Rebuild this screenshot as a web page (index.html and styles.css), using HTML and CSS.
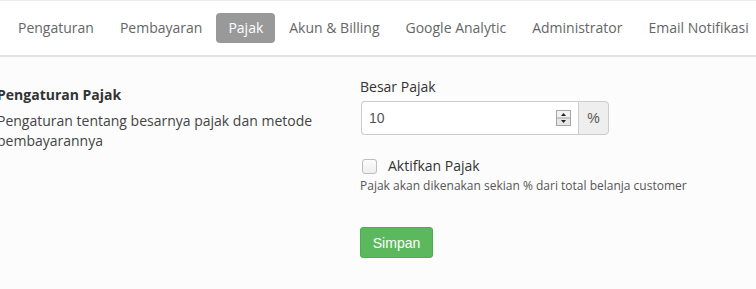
FILE: index.html
```html
<!DOCTYPE html>
<html>
<head>
<meta charset="utf-8">
<link rel="stylesheet" href="styles.css">
</head>
<body>
<div class="page">
  <nav class="tabs">
    <a class="tab">Pengaturan</a>
    <a class="tab">Pembayaran</a>
    <a class="tab active">Pajak</a>
    <a class="tab">Akun &amp; Billing</a>
    <a class="tab">Google Analytic</a>
    <a class="tab">Administrator</a>
    <a class="tab">Email Notifikasi</a>
  </nav>
  <div class="content">
    <div class="info">
      <h4 class="title">Pengaturan Pajak</h4>
      <p class="desc">Pengaturan tentang besarnya pajak dan metode pembayarannya</p>
    </div>
    <div class="form">
      <label class="label">Besar Pajak</label>
      <div class="input-group">
        <div class="input">
          <span class="value">10</span>
          <svg class="spin" width="15" height="16" viewBox="0 0 15 16">
            <rect x="0.5" y="0.5" width="14" height="15" fill="#e6e6e6" stroke="#a6a6a6"/>
            <rect x="1" y="1" width="13" height="6.5" fill="#f2f2f2"/>
            <line x1="1" y1="8" x2="14" y2="8" stroke="#a6a6a6"/>
            <polygon points="5,6 10,6 7.5,3" fill="#222"/>
            <polygon points="5,10 10,10 7.5,13" fill="#222"/>
          </svg>
        </div>
        <span class="addon">%</span>
      </div>
      <div class="check">
        <span class="box"></span>
        <span class="check-label">Aktifkan Pajak</span>
      </div>
      <p class="help">Pajak akan dikenakan sekian % dari total belanja customer</p>
      <button class="btn">Simpan</button>
    </div>
  </div>
</div>
</body>
</html>
```
FILE: styles.css
```css
html, body {
  margin: 0;
  padding: 0;
  background: #fcfcfc;
}
.page {
  font-family: "Open Sans", "Liberation Sans", sans-serif;
  font-size: 14px;
  color: #333;
  width: 756px;
  height: 289px;
  overflow: hidden;
}
.tabs {
  display: flex;
  gap: 2px;
  background: #fff;
  border-top: 1px solid #ececec;
  border-bottom: 2px solid #e3e3e3;
  padding: 12px 0 12px 6px;
  white-space: nowrap;
}
.tab {
  display: block;
  padding: 5px 12px;
  line-height: 20px;
  color: #666;
  border-radius: 4px;
  flex: none;
}
.tab.active {
  background: #999;
  color: #fff;
}
.content {
  display: flex;
  padding-top: 20px;
}
.info {
  width: 363px;
  margin-left: -3px;
  padding-top: 8px;
  flex: none;
}
.title {
  margin: 0;
  font-size: 14px;
  font-weight: 700;
  line-height: 20px;
  color: #333;
}
.desc {
  margin: 6px 0 0;
  width: 330px;
  line-height: 20px;
  color: #444;
}
.form {
  display: flex;
  flex-direction: column;
  align-items: flex-start;
}
.label {
  line-height: 20px;
  color: #333;
}
.input-group {
  display: flex;
  margin-top: 4px;
  margin-left: 1px;
  width: 248px;
  height: 34px;
}
.input {
  flex: 1;
  display: flex;
  align-items: center;
  justify-content: space-between;
  border: 1px solid #ccc;
  border-right: none;
  border-radius: 4px 0 0 4px;
  background: #fff;
  padding: 0 7px 0 7px;
}
.value {
  font-family: "Liberation Sans", Arial, sans-serif;
  font-size: 14px;
  color: #555;
}
.spin {
  display: block;
}
.addon {
  width: 29px;
  display: flex;
  align-items: center;
  justify-content: center;
  background: #eee;
  border: 1px solid #ccc;
  border-radius: 0 4px 4px 0;
  font-family: "Liberation Sans", Arial, sans-serif;
  font-size: 14px;
  color: #555;
}
.check {
  display: flex;
  align-items: center;
  margin-top: 21px;
  margin-left: 2px;
  line-height: 20px;
}
.box {
  width: 13px;
  height: 13px;
  border: 1px solid #bdbdbd;
  border-radius: 3px;
  background: linear-gradient(#fcfcfc, #eeeeee);
  margin-right: 11px;
}
.check-label {
  color: #333;
}
.help {
  margin: 1px 0 0;
  font-size: 12px;
  line-height: 17px;
  color: #555;
}
.btn {
  margin-top: 33px;
  font-family: "Liberation Sans", Arial, sans-serif;
  font-size: 14px;
  color: #fff;
  background: #5cb85c;
  border: 1px solid #4cae4c;
  border-radius: 3px;
  height: 31px;
  width: 73px;
  padding: 0;
}
```
